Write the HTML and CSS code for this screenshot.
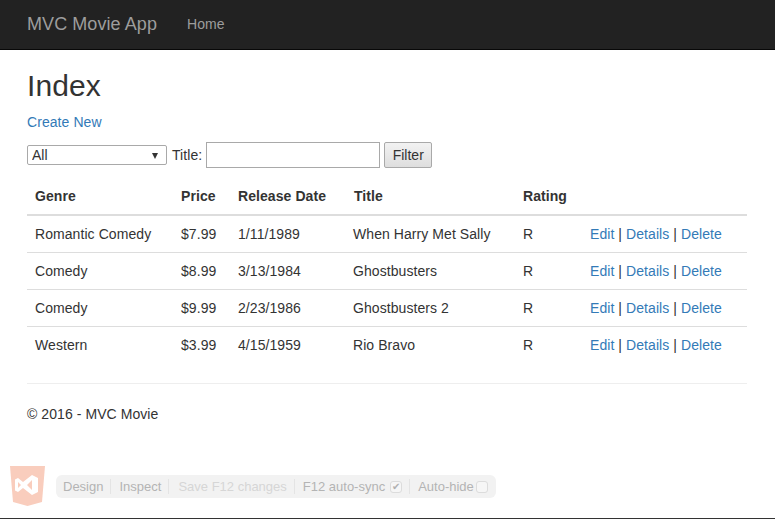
FILE: index.html
```html
<!DOCTYPE html>
<html>
	<head>
		<meta charset="utf-8">
		<meta name="viewport" content="width=device-width, initial-scale=1">
		<title>Index - Movie App</title>
		<link rel="stylesheet" href="styles.css">
	</head>
	<body>
		<div class="navbar">
			<a class="brand" href="#">MVC Movie App</a>
			<a class="nav-link" href="#">Home</a>
		</div>
		<div class="container">
			<h2>Index</h2>
			<p class="create"><a href="#">Create New</a></p>
			<form class="filter">
				<span class="select-wrap"><select class="genre"><option>All</option></select></span>
				<span>Title:</span>
				<input class="title-input" type="text">
				<input class="filter-btn" type="submit" value="Filter">
			</form>
			<table class="table">
				<colgroup>
					<col class="c-genre"><col class="c-price"><col class="c-date"><col class="c-title"><col class="c-rating"><col>
				</colgroup>
				<thead>
					<tr><th>Genre</th><th>Price</th><th>Release Date</th><th>Title</th><th>Rating</th><th></th></tr>
				</thead>
				<tbody>
					<tr>
						<td>Romantic Comedy</td><td>$7.99</td><td>1/11/1989</td><td>When Harry Met Sally</td><td>R</td>
						<td><a href="#">Edit</a> | <a href="#">Details</a> | <a href="#">Delete</a></td>
					</tr>
					<tr>
						<td>Comedy</td><td>$8.99</td><td>3/13/1984</td><td>Ghostbusters</td><td>R</td>
						<td><a href="#">Edit</a> | <a href="#">Details</a> | <a href="#">Delete</a></td>
					</tr>
					<tr>
						<td>Comedy</td><td>$9.99</td><td>2/23/1986</td><td>Ghostbusters 2</td><td>R</td>
						<td><a href="#">Edit</a> | <a href="#">Details</a> | <a href="#">Delete</a></td>
					</tr>
					<tr>
						<td>Western</td><td>$3.99</td><td>4/15/1959</td><td>Rio Bravo</td><td>R</td>
						<td><a href="#">Edit</a> | <a href="#">Details</a> | <a href="#">Delete</a></td>
					</tr>
				</tbody>
			</table>
			<hr>
			<footer>&copy; 2016 - MVC Movie</footer>
		</div>
		<div class="browserlink">
			<svg class="vs-logo" width="36" height="41" viewBox="0 0 36 41">
				<path fill="#f9cdbd" d="M0 0H35L32 36L17.500 40L3 36Z"/>
				<path fill="#fff" fill-rule="evenodd" d="M22 9L28 12V26L22 29L13 22L8 26L5 24.500V13.500L8 12L13 16ZM22 14L17 19L22 24ZM8 16V22L11 19Z"/>
			</svg>
			<div class="bl-bar">
				<span class="bl-item">Design</span>
				<span class="bl-item">Inspect</span>
				<span class="bl-item off">Save F12 changes</span>
				<span class="bl-item sync">F12 auto-sync <i class="bl-check">&#10004;</i></span>
				<span class="bl-item hide">Auto-hide <i class="bl-check"></i></span>
			</div>
		</div>
		<div class="taskbar-edge"></div>
	</body>
</html>
```

FILE: styles.css
```css
*{
	box-sizing: border-box;
}
html, body{
	height: 100%;
}
body{
	margin: 0;
	padding-top: 50px;
	font-family: "Liberation Sans", Arial, sans-serif;
	font-size: 14px;
	line-height: 20px;
	letter-spacing: 0.07px;
	color: #333;
	background: #fff;
	overflow: hidden;
}
a{
	color: #337ab7;
	text-decoration: none;
}
.navbar{
	position: fixed;
	top: 0;
	left: 0;
	right: 0;
	height: 50px;
	display: flex;
	align-items: center;
	padding: 0 0 2px 27px;
	background: #222;
	border-bottom: 1px solid #080808;
}
.brand{
	color: #9d9d9d;
	font-size: 18px;
}
.nav-link{
	color: #9d9d9d;
	margin-left: 30px;
}
.container{
	padding: 0 28px 0 27px;
}
h2{
	margin: 19px 0 10px;
	font-size: 30px;
	font-weight: 500;
	line-height: 33px;
}
.create{
	margin: 0 0 10px;
}
.filter{
	display: flex;
	align-items: center;
	gap: 4px;
	height: 26px;
	margin-bottom: 10px;
}
.select-wrap{
	position: relative;
	display: block;
	width: 140px;
	height: 20px;
	margin-right: 1px;
}
.select-wrap::after{
	content: "";
	position: absolute;
	top: 8px;
	right: 9px;
	border-left: 3.500px solid transparent;
	border-right: 3.500px solid transparent;
	border-top: 6px solid #333;
}
.genre{
	display: block;
	width: 100%;
	height: 100%;
	padding: 0 0 0 4px;
	font: 14px "Liberation Sans", Arial, sans-serif;
	color: #333;
	background: #fff;
	border: 1px solid #a9a9a9;
	border-radius: 2px;
	appearance: none;
}
.title-input{
	width: 174px;
	height: 26px;
	border: 1px solid #a9a9a9;
	background: #fff;
}
.filter-btn{
	width: 48px;
	height: 26px;
	padding: 0;
	font: 14px "Liberation Sans", Arial, sans-serif;
	color: #333;
	background: linear-gradient(#f2f2f2, #dedede);
	border: 1px solid #a9a9a9;
	border-radius: 2px;
}
.table{
	width: 720px;
	table-layout: fixed;
	border-collapse: collapse;
	margin-bottom: 20px;
}
.c-genre{ width: 146px; }
.c-price{ width: 57px; }
.c-date{ width: 116px; }
.c-title{ width: 169px; }
.c-rating{ width: 67px; }
.table th, .table td{
	padding: 8px;
	text-align: left;
	vertical-align: top;
	white-space: nowrap;
}
.table th{
	font-weight: bold;
	border-bottom: 2px solid #ddd;
}
.table td{
	border-top: 1px solid #ddd;
}
.table td:nth-child(4){
	padding-left: 7px;
}
hr{
	margin: 20px 0;
	border: 0;
	border-top: 1px solid #eee;
}
footer{
	line-height: 20px;
}
.browserlink{
	position: fixed;
	left: 10px;
	top: 466px;
	display: flex;
	align-items: flex-start;
	letter-spacing: 0;
}
.vs-logo{
	display: block;
}
.bl-bar{
	display: flex;
	align-items: center;
	height: 23px;
	margin: 9px 0 0 10px;
	padding: 0 8px 0 0;
	background: #f2f2f2;
	border-radius: 6px;
	color: #b4b4b4;
	font-size: 13px;
	white-space: nowrap;
}
.bl-item{
	display: flex;
	align-items: center;
	gap: 3px;
	padding: 0 7px 0 8px;
	border-right: 1px solid #e4e4e4;
	height: 15px;
}
.bl-item:first-child{
	padding-left: 7px;
}
.bl-item:last-child{
	border-right: 0;
	padding-right: 0;
}
.bl-item.off{
	color: #d6d6d6;
	padding-left: 9px;
}
.bl-item.sync{
	gap: 5px;
}
.bl-item.hide{
	gap: 2px;
}
.bl-check{
	display: inline-flex;
	align-items: center;
	justify-content: center;
	width: 12px;
	height: 12px;
	border: 1px solid #dcdcdc;
	border-radius: 3px;
	background: #f6f6f6;
	color: #b0b0b0;
	font-size: 10px;
	font-style: normal;
}
.taskbar-edge{
	position: fixed;
	left: 0;
	right: 0;
	bottom: 0;
	height: 1px;
	background: #333;
}
```
